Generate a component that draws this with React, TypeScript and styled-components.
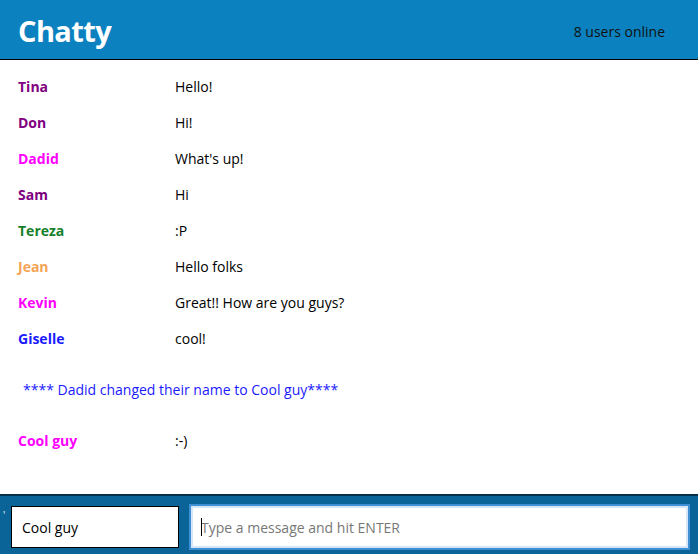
import React from "react";
import styled, { createGlobalStyle } from "styled-components";

const Global = createGlobalStyle`
  html, body { margin: 0; padding: 0; height: 100%; }
  body { font-family: "Open Sans", "Noto Sans", sans-serif; background: #fff; }
  #root { height: 100%; }
  * { box-sizing: border-box; }
`;

const Page = styled.div`
  height: 554px;
  display: flex;
  flex-direction: column;
`;

const Header = styled.header`
  height: 60px;
  flex: none;
  background: #0b81bf;
  border-bottom: 1px solid #000;
  display: flex;
  align-items: center;
  justify-content: space-between;
  padding: 2px 33px 0 18px;
`;

const Title = styled.h1`
  margin: 0;
  color: #fff;
  font-size: 29px;
  font-weight: 700;
  letter-spacing: -0.6px;
`;

const Online = styled.span`
  font-size: 14px;
  color: #111;
  padding-top: 2px;
`;

const Messages = styled.main`
  flex: 1;
  padding-top: 8px;
  display: flex;
  flex-direction: column;
`;

const Row = styled.div`
  height: 36px;
  display: flex;
  align-items: center;
  font-size: 14px;
  padding-left: 18px;
`;

const Name = styled.span<{ $color: string }>`
  width: 157px;
  font-weight: 700;
  color: ${(p) => p.$color};
`;

const Content = styled.span`
  color: #000;
`;

const System = styled.div`
  height: 66px;
  display: flex;
  align-items: center;
  padding-left: 23px;
  font-size: 14px;
  color: #1a1aff;
`;

const Footer = styled.footer`
  height: 60px;
  flex: none;
  background: #0a6498;
  border-top: 2px solid #07304a;
  display: flex;
  align-items: flex-start;
  padding: 10px 10px 0 3px;
`;

const Tick = styled.span`
  width: 8px;
  color: #fff;
  font-size: 10px;
  line-height: 10px;
  margin-top: 4px;
`;

const UserInput = styled.input`
  width: 168px;
  height: 42px;
  border: 1px solid #000;
  background: #fff;
  font-family: inherit;
  font-size: 14px;
  padding: 0 10px;
  color: #000;
  outline: none;
`;

const MessageWrap = styled.div`
  position: relative;
  flex: 1;
  margin-left: 12px;
`;

const MessageInput = styled.input`
  width: 100%;
  height: 42px;
  border: 2px solid #d4e6f7;
  box-shadow: 0 0 0 2px #3f8fd4;
  background: #fff;
  font-family: inherit;
  font-size: 14px;
  padding: 0 8px;
  outline: none;
  &::placeholder { color: #777; }
`;

const Caret = styled.span`
  position: absolute;
  left: 10px;
  top: 12px;
  width: 1px;
  height: 18px;
  background: #000;
`;

const users = [
  { name: "Tina", color: "#800080", text: "Hello!" },
  { name: "Don", color: "#800080", text: "Hi!" },
  { name: "Dadid", color: "#ff00ff", text: "What's up!" },
  { name: "Sam", color: "#800080", text: "Hi" },
  { name: "Tereza", color: "#17802a", text: ":P" },
  { name: "Jean", color: "#f4a455", text: "Hello folks" },
  { name: "Kevin", color: "#ff00ff", text: "Great!! How are you guys?" },
  { name: "Giselle", color: "#1a1aff", text: "cool!" },
];

export default function App() {
  return (
    <Page>
      <Global />
      <Header>
        <Title>Chatty</Title>
        <Online>8 users online</Online>
      </Header>
      <Messages>
        {users.map((u, i) => (
          <Row key={i}>
            <Name $color={u.color}>{u.name}</Name>
            <Content>{u.text}</Content>
          </Row>
        ))}
        <System>**** Dadid changed their name to Cool guy****</System>
        <Row>
          <Name $color="#ff00ff">Cool guy</Name>
          <Content>:-)</Content>
        </Row>
      </Messages>
      <Footer>
        <Tick>'</Tick>
        <UserInput defaultValue="Cool guy" />
        <MessageWrap>
          <MessageInput placeholder="Type a message and hit ENTER" />
          <Caret />
        </MessageWrap>
      </Footer>
    </Page>
  );
}
